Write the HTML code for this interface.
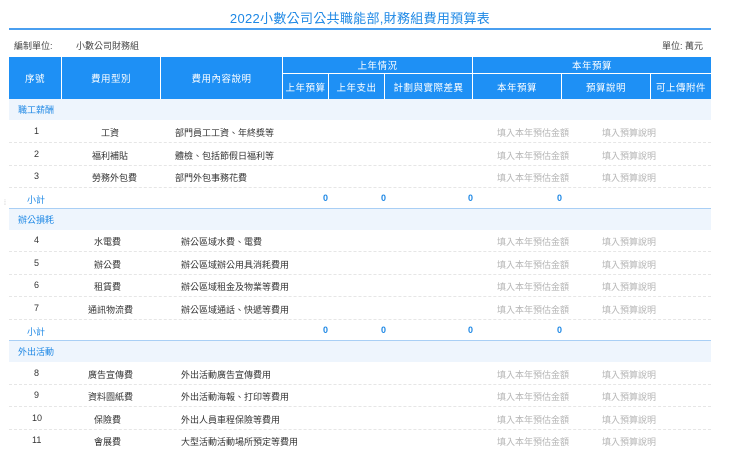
<!DOCTYPE html>
<html><head><meta charset="utf-8"><style>
*{margin:0;padding:0;box-sizing:border-box}
body{width:740px;height:449px;background:#fff;font-family:"Liberation Sans","Noto Sans CJK TC",sans-serif;font-size:9px;color:#333;position:relative;overflow:hidden}
.a{position:absolute;white-space:nowrap}
.title{left:0;width:720px;top:8px;text-align:center;font-size:13px;color:#1e88e5;letter-spacing:0.3px}
.line{left:9px;width:702px;top:28px;height:2px;background:#4a9ff0}
.hd{position:absolute;background:#1e90f5;color:#fff;font-size:9.5px;display:flex;align-items:center;justify-content:center;letter-spacing:0.5px}
.sec{position:absolute;left:9px;width:702px;height:21px;background:#eef5fd;color:#1e88e5;font-size:9px;padding-left:9px;line-height:22px}
.row{position:absolute;left:9px;width:702px;height:22.5px;border-bottom:1px dashed #e6e6e6}
.row span{position:absolute;top:6px;font-size:9px}
.ph{color:#b5b5b5}
.sub{position:absolute;left:9px;width:702px;height:21px;color:#1e88e5;font-weight:bold;border-bottom:1.5px solid #a9cff5}
.sub span{position:absolute;top:5px}
.sub span:first-child{font-weight:normal}
</style></head><body>
<div class="a title">2022小數公司公共職能部,財務組費用預算表</div>
<div class="a line"></div>
<div class="a" style="left:14px;top:39px;color:#444">編制單位:</div>
<div class="a" style="left:76px;top:39px;color:#444">小數公司財務組</div>
<div class="a" style="left:662px;top:39px;color:#444">單位: 萬元</div>
<div class="a" style="left:4px;top:200px;color:#bbb;font-size:7px">⁞</div>

<div class="hd" style="left:9px;top:57px;width:52px;height:42px">序號</div>
<div class="hd" style="left:62px;top:57px;width:98px;height:42px">費用型別</div>
<div class="hd" style="left:161px;top:57px;width:121px;height:42px">費用內容說明</div>
<div class="hd" style="left:283px;top:57px;width:189px;height:16px">上年情況</div>
<div class="hd" style="left:473px;top:57px;width:238px;height:16px">本年預算</div>
<div class="hd" style="left:283px;top:74px;width:45px;height:25px">上年預算</div>
<div class="hd" style="left:329px;top:74px;width:55px;height:25px">上年支出</div>
<div class="hd" style="left:385px;top:74px;width:87px;height:25px">計劃與實際差異</div>
<div class="hd" style="left:473px;top:74px;width:88px;height:25px">本年預算</div>
<div class="hd" style="left:562px;top:74px;width:88px;height:25px">預算說明</div>
<div class="hd" style="left:651px;top:74px;width:60px;height:25px">可上傳附件</div>

<div class="sec" style="top:99px">職工薪酬</div>
<div class="row" style="top:120px"><span style="left:25px">1</span><span style="left:92px">工資</span><span style="left:166px">部門員工工資、年終獎等</span><span class="ph" style="left:488px">填入本年預估金額</span><span class="ph" style="left:593px">填入預算說明</span></div>
<div class="row" style="top:143px"><span style="left:25px">2</span><span style="left:83px">福利補貼</span><span style="left:166px">體檢、包括節假日福利等</span><span class="ph" style="left:488px">填入本年預估金額</span><span class="ph" style="left:593px">填入預算說明</span></div>
<div class="row" style="top:165px"><span style="left:25px">3</span><span style="left:83px">勞務外包費</span><span style="left:166px">部門外包事務花費</span><span class="ph" style="left:488px">填入本年預估金額</span><span class="ph" style="left:593px">填入預算說明</span></div>
<div class="sub" style="top:188px"><span style="left:18px">小計</span><span style="left:314px">0</span><span style="left:372px">0</span><span style="left:459px">0</span><span style="left:548px">0</span></div>

<div class="sec" style="top:209px">辦公損耗</div>
<div class="row" style="top:229px"><span style="left:25px">4</span><span style="left:85px">水電費</span><span style="left:172px">辦公區域水費、電費</span><span class="ph" style="left:488px">填入本年預估金額</span><span class="ph" style="left:593px">填入預算說明</span></div>
<div class="row" style="top:252px"><span style="left:25px">5</span><span style="left:85px">辦公費</span><span style="left:172px">辦公區域辦公用具消耗費用</span><span class="ph" style="left:488px">填入本年預估金額</span><span class="ph" style="left:593px">填入預算說明</span></div>
<div class="row" style="top:274px"><span style="left:25px">6</span><span style="left:85px">租賃費</span><span style="left:172px">辦公區域租金及物業等費用</span><span class="ph" style="left:488px">填入本年預估金額</span><span class="ph" style="left:593px">填入預算說明</span></div>
<div class="row" style="top:297px"><span style="left:25px">7</span><span style="left:79px">通訊物流費</span><span style="left:172px">辦公區域通話、快遞等費用</span><span class="ph" style="left:488px">填入本年預估金額</span><span class="ph" style="left:593px">填入預算說明</span></div>
<div class="sub" style="top:320px"><span style="left:18px">小計</span><span style="left:314px">0</span><span style="left:372px">0</span><span style="left:459px">0</span><span style="left:548px">0</span></div>

<div class="sec" style="top:341px">外出活動</div>
<div class="row" style="top:362px"><span style="left:25px">8</span><span style="left:79px">廣告宣傳費</span><span style="left:172px">外出活動廣告宣傳費用</span><span class="ph" style="left:488px">填入本年預估金額</span><span class="ph" style="left:593px">填入預算說明</span></div>
<div class="row" style="top:384px"><span style="left:25px">9</span><span style="left:79px">資料圖紙費</span><span style="left:172px">外出活動海報、打印等費用</span><span class="ph" style="left:488px">填入本年預估金額</span><span class="ph" style="left:593px">填入預算說明</span></div>
<div class="row" style="top:407px"><span style="left:23px">10</span><span style="left:85px">保險費</span><span style="left:172px">外出人員車程保險等費用</span><span class="ph" style="left:488px">填入本年預估金額</span><span class="ph" style="left:593px">填入預算說明</span></div>
<div class="row" style="top:429px;border-bottom:none"><span style="left:23px">11</span><span style="left:85px">會展費</span><span style="left:172px">大型活動活動場所預定等費用</span><span class="ph" style="left:488px">填入本年預估金額</span><span class="ph" style="left:593px">填入預算說明</span></div>
</body></html>
